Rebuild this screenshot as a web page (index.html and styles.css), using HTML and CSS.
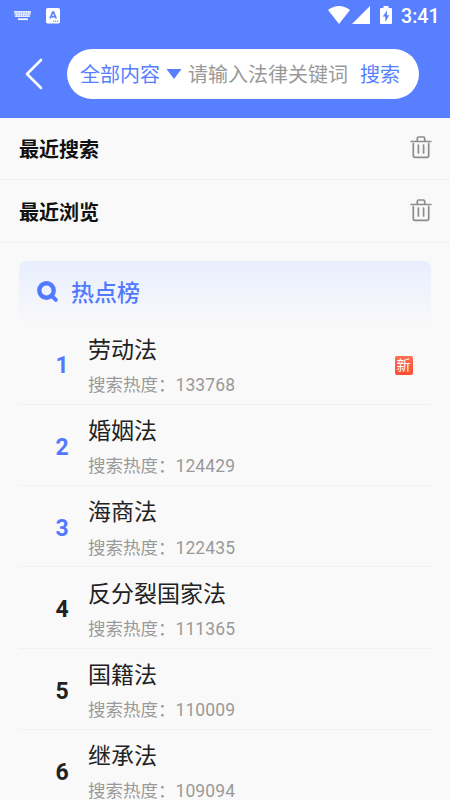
FILE: index.html
```html
<!DOCTYPE html>
<html lang="zh-CN">
<head>
<meta charset="utf-8">
<title>搜索</title>
<link rel="stylesheet" href="styles.css">
</head>
<body>
<header class="top">
  <div class="status">
    <svg class="keyboard" width="18" height="10" viewBox="0 0 18 10"><path d="M0 0h17l-1 6H1z" fill="#e2e9ff"/><path d="M1.500 2h14M1 4.200h15" stroke="#577fff" stroke-width=".8" stroke-dasharray="1 1.300"/><path d="M4 8.200h10" stroke="#f3f6ff" stroke-width="1.800"/></svg>
    <svg class="ime" width="14" height="16" viewBox="0 0 14 16"><rect width="14" height="15.500" rx="1.800" fill="#fff"/><path d="M4 10.500 6.700 4h.8l2.700 6.500M5 8.600h4.200" fill="none" stroke="#577fff" stroke-width="1.600"/><path d="M7 13.200h5.500" stroke="#577fff" stroke-width="1" stroke-dasharray="1.300 .7"/></svg>
    <span class="spacer"></span>
    <svg width="22" height="18" viewBox="0 0 22 18"><path d="M0 4Q11-4 22 4L11 18Z" fill="#fff"/></svg>
    <svg class="signal" width="18" height="18" viewBox="0 0 18 18"><path d="M18 0v18H0z" fill="#fff"/></svg>
    <svg class="battery" width="12" height="18" viewBox="0 0 12 18"><path d="M3.500 0h5v2H11q1 0 1 1v14q0 1-1 1H1q-1 0-1-1V3q0-1 1-1h2.500z" fill="#fff"/><path d="M7 4.500 2.800 10.500h2.500V16L9.200 9.300H6.800z" fill="#577fff"/></svg>
    <span class="clock">3:41</span>
  </div>
  <div class="searchbar">
    <svg class="back" width="18" height="32" viewBox="0 0 18 32"><path d="M16 2 2 16l14 14" fill="none" stroke="#fff" stroke-width="2.600" stroke-linecap="round" stroke-linejoin="round"/></svg>
    <div class="field">
      <span>全部内容</span>
      <svg class="caret" width="16" height="10" viewBox="0 0 16 10"><path d="M.5 0h15L8 10z" fill="#577fff"/></svg>
      <span class="placeholder">请输入法律关键词</span>
      <span class="submit">搜索</span>
    </div>
  </div>
</header>
<section class="history"><h2>最近搜索</h2><svg class="trash" width="22" height="24" viewBox="0 0 22 24"><path d="M1.200 6.500h19.600M7.300 6V3.500q0-1.500 1.500-1.500h4.400q1.500 0 1.500 1.500V6M3.300 8.700v11.800q0 1.800 1.800 1.800h11.800q1.800 0 1.800-1.800V8.700M8.400 10v8M13.600 10v8" fill="none" stroke="#8c8c8c" stroke-width="1.700" stroke-linecap="round"/></svg></section>
<section class="history"><h2>最近浏览</h2><svg class="trash" width="22" height="24" viewBox="0 0 22 24"><path d="M1.200 6.500h19.600M7.300 6V3.500q0-1.500 1.500-1.500h4.400q1.500 0 1.500 1.500V6M3.300 8.700v11.800q0 1.800 1.800 1.800h11.800q1.800 0 1.800-1.800V8.700M8.400 10v8M13.600 10v8" fill="none" stroke="#8c8c8c" stroke-width="1.700" stroke-linecap="round"/></svg></section>
<main class="hot">
  <div class="hot-head">
    <svg width="22" height="22" viewBox="0 0 22 22"><circle cx="9.500" cy="9.500" r="7.200" fill="none" stroke="#527aff" stroke-width="4.400"/><path d="m14.500 14.500 4.300 4.300" stroke="#527aff" stroke-width="4" stroke-linecap="round"/></svg>
    <span>热点榜</span>
  </div>
  <ol class="list">
    <li class="row top3"><b>1</b><div><p class="name">劳动法</p><p class="heat">搜索热度：<span>133768</span></p></div><i class="new">新</i></li>
    <li class="row top3"><b>2</b><div><p class="name">婚姻法</p><p class="heat">搜索热度：<span>124429</span></p></div></li>
    <li class="row top3"><b>3</b><div><p class="name">海商法</p><p class="heat">搜索热度：<span>122435</span></p></div></li>
    <li class="row"><b>4</b><div><p class="name">反分裂国家法</p><p class="heat">搜索热度：<span>111365</span></p></div></li>
    <li class="row"><b>5</b><div><p class="name">国籍法</p><p class="heat">搜索热度：<span>110009</span></p></div></li>
    <li class="row"><b>6</b><div><p class="name">继承法</p><p class="heat">搜索热度：<span>109094</span></p></div></li>
  </ol>
</main>
</body>
</html>
```
FILE: styles.css
```css
* { box-sizing: border-box; margin: 0; padding: 0; }
body {
  height: 800px;
  overflow: hidden;
  background: #f9f9f9;
  color: #222;
  font-family: Roboto, "Noto Sans CJK SC", sans-serif;
}
svg { display: block; flex: none; }
.top { height: 117.5px; background: #577fff; }
.status { display: flex; height: 30px; padding: 6px 11px 0 14px; }
.keyboard { margin-top: 5px; }
.ime { margin: 2px 0 0 14px; }
.spacer { flex: 1; }
.signal { margin-left: 2px; }
.battery { margin-left: 10px; }
.clock { margin: 1px 0 0 9px; width: 38px; color: #fff; font-size: 19.6px; font-weight: 500; line-height: 20px; white-space: nowrap; }
.searchbar { display: flex; align-items: center; height: 87px; padding: 0 31px 0 25px; }
.field {
  display: flex;
  align-items: center;
  flex: 1;
  height: 50px;
  margin-left: 24px;
  padding-left: 13px;
  border-radius: 25px;
  background: #fff;
  color: #577fff;
  font-size: 20px;
  line-height: 30px;
  white-space: nowrap;
}
.field span { padding-top: 3px; }
.caret { margin: 0 6px; }
.placeholder { color: #999; }
.submit { margin-left: 12px; }
.history {
  display: flex;
  align-items: center;
  justify-content: space-between;
  height: 62.9px;
  padding: 0 18px 0 19px;
  border-bottom: 1px solid #eff2f2;
}
.trash { margin-bottom: 3px; }
.history h2 { padding-top: 3px; color: #111; font-size: 20px; line-height: 30px; font-weight: 700; }
.hot { margin: 18px 19px 0; }
.hot-head {
  display: flex;
  align-items: center;
  gap: 12px;
  height: 62.3px;
  padding-left: 18px;
  border-radius: 8px 8px 0 0;
  background: linear-gradient(#e8eeff, #f9f9f9);
  color: #527aff;
  font-size: 23px;
  font-weight: 500;
}
.hot-head span { padding-bottom: 2px; }
.list { list-style: none; }
.row {
  display: flex;
  align-items: flex-start;
  height: 81.3px;
  padding-right: 18.5px;
  border-bottom: 1px solid #eff2f2;
}
.row b { width: 50px; padding-left: 36.5px; margin: 28.8px 19px 0 0; font-size: 23px; line-height: 28px; }
.top3 b { color: #527aff; }
.name { padding-top: 9.3px; font-size: 23px; line-height: 36px; }
.heat { margin-top: 7.1px; color: #999; font-size: 17.5px; line-height: 18px; }
.heat span { letter-spacing: .1px; }
.new {
  width: 18px;
  height: 19px;
  margin: 32px 0 0 auto;
  border-radius: 2px;
  background: linear-gradient(#fb7056, #ff4c31);
  color: #fff;
  font-size: 14px;
  line-height: 18px;
  font-style: normal;
  text-align: center;
}
```
